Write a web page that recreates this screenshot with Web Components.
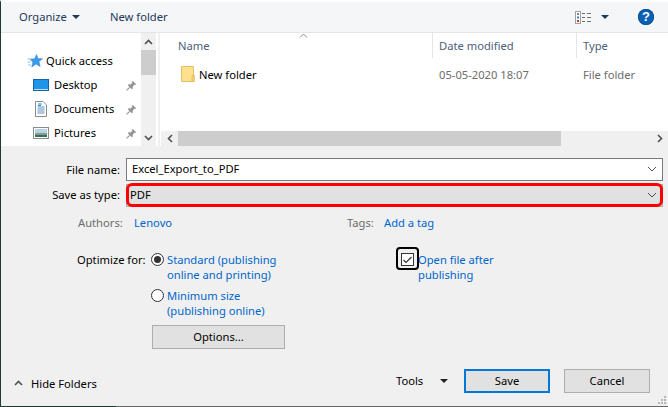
<!DOCTYPE html>
<html>
<head>
<meta charset="utf-8">
<title>Publish as PDF</title>
<style>
  html, body { margin: 0; padding: 0; background: #f0f0f0; }
  body { font: 11.2px "Noto Sans", "Open Sans", sans-serif; color: #000; }
</style>
</head>
<body>
<save-dialog>
  <dialog-toolbar slot="top"></dialog-toolbar>
  <nav-pane slot="nav"></nav-pane>
  <file-list slot="files"></file-list>
  <publish-form slot="form"></publish-form>
</save-dialog>

<script>
//small helper, every element is the same shape
function define(name, html){
  customElements.define(name, class extends HTMLElement{
    constructor(){
      super();
      this.attachShadow({mode: 'open'});
      this.shadowRoot.innerHTML = html;
    }
  });
}

const PIN = `<svg slot="pin" width="11" height="11" viewBox="0 0 12 12"><path d="M7.2 .8 11.2 4.800 10.200 5.400 9.400 5 7.300 7.200 7.400 9.400 6.400 10.200 1.900 5.600 2.800 4.700 5 4.800 7 2.700 6.700 1.800Z" fill="#8f9499"/><path d="M4 8 .6 11.400" stroke="#8f9499" stroke-width="1.200"/></svg>`;

const ICONS = {
  star: `<svg slot="icon" width="16" height="14" viewBox="0 0 16 14"><path d="M9.500 .5 11 4.600 15.500 4.800 12 7.600 13.200 12.600 9 10 4.800 13 5.800 8 3 5.200 7.600 4.800Z" fill="#3c9be8" stroke="#2a7fcf" stroke-width=".5"/><path d="M.5 5H4M.5 8H3.500M1 11H4" stroke="#8cc4f0"/></svg>`,
  desktop: `<svg slot="icon" width="16" height="12" viewBox="0 0 16 12"><rect x=".5" y=".5" width="15" height="11" fill="#1d96ea" stroke="#14649f"/><path d="M1 10.500H15" stroke="#bfe2fa"/></svg>`,
  documents: `<svg slot="icon" width="12" height="16" viewBox="0 0 12 16"><path d="M.5 .5H8L11.500 4V15.500H.5Z" fill="#fff" stroke="#8b8b8b"/><path d="M2.500 6H9.500M2.500 8H9.500M2.500 10H9.500M2.500 12H9.500" stroke="#5f8fbf"/><path d="M3 3H7M3 4.500H6" stroke="#2f8fe0"/></svg>`,
  pictures: `<svg slot="icon" width="16" height="12" viewBox="0 0 16 12"><rect x=".5" y=".5" width="15" height="11" fill="#fff" stroke="#8b8b8b"/><rect x="2" y="2" width="12" height="4" fill="#b6d3ea"/><rect x="2" y="6" width="12" height="2" fill="#7f9f8f"/><rect x="2" y="8" width="12" height="2" fill="#3f6a55"/></svg>`
};

define('nav-row', `
  <style>
    :host{ display: flex; align-items: center; height: 24px; }
    :host(.child){ margin-left: 6px; }
    .icon{ width: 16px; display: flex; align-items: center; justify-content: center; margin-right: 3px; }
    :host(.child) .icon{ margin-right: 5px; }
    .text{ flex: 1; white-space: nowrap; margin-top: -2px; }
    .pin{ display: flex; margin-right: 4px; }
  </style>
  <span class="icon"><slot name="icon"></slot></span>
  <span class="text"><slot></slot></span>
  <span class="pin"><slot name="pin"></slot></span>
`);

define('dialog-toolbar', `
  <style>
    :host{
      display: flex; align-items: center; height: 30px; background: #f5f6f7;
      border-bottom: 1px solid #e5e5e5; color: #1e395b; padding-left: 18px;
    }
    .caret{ width: 0; height: 0; border: 4px solid transparent; border-top: 4px solid #1e395b; border-bottom: 0; }
    .organize{ width: 53px; margin-top: -2px; }
    .new{ margin: -2px 0 0 30px; flex: 1; }
    .views{ display: flex; }
    .help{
      width: 16px; height: 16px; border-radius: 50%; background: #0b62b5; color: #fff;
      font: bold 13px/16px "Liberation Sans", sans-serif; text-align: center; margin: 0 14px 0 29px;
      box-shadow: inset 0 0 0 1px #0a4f94;
    }
  </style>
  <span class="organize">Organize</span><span class="caret"></span>
  <span class="new">New folder</span>
  <svg class="views" width="16" height="13" viewBox="0 0 16 13">
    <rect x=".5" y=".5" width="5" height="12" fill="#fff" stroke="#a0a0a0"/>
    <rect x="2" y="2" width="2" height="2" fill="#808080"/><rect x="2" y="5.500" width="2" height="2" fill="#2f7fd0"/><rect x="2" y="9" width="2" height="2" fill="#d03030"/>
    <path d="M7 2.500H10M12 2.500H16M7 6.500H10M12 6.500H16M7 10.500H10M12 10.500H16" stroke="#707070"/>
  </svg>
  <span class="caret" style="margin-left:10px"></span>
  <span class="help">?</span>
`);

define('nav-pane', `
  <style>
    :host{ display: flex; width: 157px; background: #fff; }
    .tree{ flex: 1; padding: 16px 0 0 26px; }
    .bar{ width: 15px; margin-right: 2px; background: #f0f0f0; display: flex; flex-direction: column; align-items: center; }
    .end{ height: 17px; display: flex; align-items: center; justify-content: center; }
    .thumb{ width: 15px; height: 25px; background: #cdcdcd; }
    .fill{ flex: 1; }
  </style>
  <div class="tree">
    <nav-row>${ICONS.star}Quick access</nav-row>
    <nav-row class="child">${ICONS.desktop}Desktop${PIN}</nav-row>
    <nav-row class="child">${ICONS.documents}Documents${PIN}</nav-row>
    <nav-row class="child">${ICONS.pictures}Pictures${PIN}</nav-row>
  </div>
  <div class="bar">
    <div class="end"><svg width="9" height="6" viewBox="0 0 9 6"><path d="M1 5 4.500 1.500 8 5" fill="none" stroke="#505050" stroke-width="1.600"/></svg></div>
    <div class="thumb"></div>
    <div class="fill"></div>
    <div class="end"><svg width="9" height="6" viewBox="0 0 9 6"><path d="M1 1 4.500 4.500 8 1" fill="none" stroke="#505050" stroke-width="1.600"/></svg></div>
  </div>
`);

define('file-list', `
  <style>
    :host{ display: flex; flex-direction: column; flex: 1; background: #fff; margin-left: 2px; padding-left: 1px; min-width: 0; }
    .cols{ display: grid; grid-template-columns: 271px 144px 1fr; }
    .head{ height: 25px; align-items: center; color: #4c607a; position: relative; }
    .head > span{ height: 25px; line-height: 25px; }
    .head > span + span{ border-left: 1px solid #e5e5e5; padding-left: 6px; }
    .head .name{ padding-left: 17px; }
    .sort{ position: absolute; left: 138px; top: 0; }
    .row{ margin-top: 4px; height: 24px; align-items: center; color: #6d6d6d; }
    .row > span + span{ padding-left: 7px; }
    .row .name{ display: flex; align-items: center; padding-left: 20px; color: #000; }
    .row svg{ margin-right: 4px; }
    .list{ flex: 1; }
    .hbar{ display: flex; height: 15px; background: #f0f0f0; align-items: center; }
    .hbar .end{ width: 17px; display: flex; align-items: center; justify-content: center; }
    .hthumb{ width: 383px; height: 15px; background: #cdcdcd; }
    .hfill{ flex: 1; }
  </style>
  <div class="list">
    <div class="cols head">
      <span class="name">Name</span><span>Date modified</span><span>Type</span>
      <svg class="sort" width="9" height="5" viewBox="0 0 9 5"><path d="M1 4.500 4.500 1 8 4.500" fill="none" stroke="#8a8a8a"/></svg>
    </div>
    <div class="cols row">
      <span class="name">
        <svg width="14" height="16" viewBox="0 0 14 16"><path d="M.5 .5H12.500V15.500H.5Z" fill="#ffe08c" stroke="#e0c068"/><path d="M11 15.500V9.500H13.500V15.500Z" fill="#f8d070" stroke="#d8b050" stroke-width=".6"/></svg>
        New folder
      </span>
      <span>05-05-2020 18:07</span><span>File folder</span>
    </div>
  </div>
  <div class="hbar">
    <div class="end"><svg width="6" height="9" viewBox="0 0 6 9"><path d="M5 1 1.500 4.500 5 8" fill="none" stroke="#505050" stroke-width="1.600"/></svg></div>
    <div class="hthumb"></div>
    <div class="hfill"></div>
    <div class="end"><svg width="6" height="9" viewBox="0 0 6 9"><path d="M1 1 4.500 4.500 1 8" fill="none" stroke="#505050" stroke-width="1.600"/></svg></div>
  </div>
`);

define('combo-field', `
  <style>
    :host{ display: flex; align-items: center; height: 23px; box-sizing: border-box; border: 1px solid #7a7a7a; background: #fff; padding: 0 5px 2px; }
    :host([select]){ background: #e1e1e1; border-color: #adadad; padding-left: 3px; }
    .value{ flex: 1; }
  </style>
  <span class="value"><slot></slot></span>
  <svg width="10" height="6" viewBox="0 0 10 6"><path d="M1 1 5 5 9 1" fill="none" stroke="#505050"/></svg>
`);

define('push-button', `
  <style>
    :host{
      display: flex; align-items: center; justify-content: center; box-sizing: border-box;
      height: 24px; background: #e1e1e1; border: 1px solid #adadad; padding-bottom: 2px;
    }
    :host([primary]){ border: 2px solid #0078d7; }
  </style>
  <slot></slot>
`);

define('radio-option', `
  <style>
    :host{ display: flex; align-items: flex-start; color: #0066cc; line-height: 15px; }
    .dot{
      width: 13px; height: 13px; box-sizing: border-box; border: 1px solid #333; border-radius: 50%;
      background: #fff; margin: 1px 3px 0 0; flex: none; display: flex; align-items: center; justify-content: center;
    }
    :host([checked]) .dot::after{ content: ""; width: 7px; height: 7px; border-radius: 50%; background: #333; }
  </style>
  <span class="dot"></span>
  <span><slot></slot></span>
`);

define('publish-form', `
  <style>
    :host{ display: flex; flex-direction: column; height: 259px; background: #f0f0f0; box-sizing: border-box; padding: 11px 5px 0 0; position: relative; }
    .field{ display: grid; grid-template-columns: 119px 1fr; align-items: center; column-gap: 6px; }
    .field + .field{ margin-top: 3px; }
    .field + .field label{ margin-top: -2px; }
    .field label{ text-align: right; white-space: nowrap; }
    .meta{ display: flex; margin: 8px 0 0 77px; height: 16px; line-height: 16px; color: #6d6d6d; }
    .meta a{ color: #0066cc; }
    .authors{ width: 269px; display: flex; }
    .authors span{ width: 56px; }
    .tags{ display: flex; }
    .tags span{ width: 37px; }
    .options{ display: flex; margin: 21px 0 0 76px; }
    .optlabel{ width: 74px; line-height: 15px; }
    .radios{ width: 250px; line-height: 15px; }
    .radios radio-option + radio-option{ margin-top: 6px; }
    .radios push-button{ width: 133px; margin: 7px 0 0 1px; }
    .check{ display: flex; align-items: flex-start; color: #0066cc; line-height: 15px; position: relative; }
    .box{
      width: 13px; height: 13px; box-sizing: border-box; border: 1px solid #333; background: #fff;
      margin: 1px 4px 0 0; flex: none; display: flex; align-items: center; justify-content: center;
    }
    .focus{ position: absolute; left: -5px; top: -5px; width: 23px; height: 23px; box-sizing: border-box; border: 2px solid #000; border-radius: 4px; }
    .foot{ display: flex; align-items: center; margin-top: auto; padding: 0 13px 13px 13px; }
    .hide{ display: flex; align-items: center; gap: 8px; flex: 1; margin-top: 4px; }
    .tools{ display: flex; align-items: center; }
    .tools span:first-child{ width: 44px; margin-top: -2px; }
    .tools .caret{ width: 0; height: 0; border: 4px solid transparent; border-top: 4px solid #222; border-bottom: 0; margin-right: 16px; }
    .foot push-button{ width: 86px; }
    .foot push-button + push-button{ margin-left: 14px; }
    .red{ position: absolute; left: 125px; top: 36px; width: 537px; height: 24px; box-sizing: border-box; border: 3px solid #f00; border-radius: 6px; }
    .grip{ position: absolute; right: 1px; bottom: 1px; }
  </style>
  <div class="field"><label>File name:</label><combo-field>Excel_Export_to_PDF</combo-field></div>
  <div class="field"><label>Save as type:</label><combo-field select>PDF</combo-field></div>
  <div class="red"></div>
  <div class="meta">
    <div class="authors"><span>Authors:</span><a>Lenovo</a></div>
    <div class="tags"><span>Tags:</span><a>Add a tag</a></div>
  </div>
  <div class="options">
    <div class="optlabel">Optimize for:</div>
    <div class="radios">
      <radio-option checked>Standard (publishing<br>online and printing)</radio-option>
      <radio-option>Minimum size<br>(publishing online)</radio-option>
      <push-button>Options...</push-button>
    </div>
    <div class="check">
      <span class="box"><svg width="9" height="8" viewBox="0 0 9 8"><path d="M.5 4 3 6.500 8.500 1" fill="none" stroke="#333" stroke-width="1.200"/></svg></span>
      <span>Open file after<br>publishing</span>
      <span class="focus"></span>
    </div>
  </div>
  <div class="foot">
    <div class="hide">
      <svg width="9" height="6" viewBox="0 0 9 6"><path d="M1 5 4.500 1.500 8 5" fill="none" stroke="#505050" stroke-width="1.600"/></svg>
      <span>Hide Folders</span>
    </div>
    <div class="tools"><span>Tools</span><span class="caret"></span></div>
    <push-button primary>Save</push-button>
    <push-button>Cancel</push-button>
  </div>
  <svg class="grip" width="9" height="9" viewBox="0 0 9 9" fill="#b8b8b8"><rect x="6" y="0" width="2" height="2"/><rect x="3" y="3" width="2" height="2"/><rect x="6" y="3" width="2" height="2"/><rect x="0" y="6" width="2" height="2"/><rect x="3" y="6" width="2" height="2"/><rect x="6" y="6" width="2" height="2"/></svg>
`);

define('save-dialog', `
  <style>
    :host{
      display: flex; flex-direction: column; width: 668px; height: 407px; box-sizing: border-box;
      border-left: 1px solid #1f3b2f; border-top: 2px solid #fff; overflow: hidden; background: #f0f0f0;
    }
    .browser{ display: flex; height: 113px; border-bottom: 1px solid #f0f0f0; }
    .edge{ height: 1px; background: linear-gradient(90deg, #1f3b2f 115px, #666 115px); }
  </style>
  <slot name="top"></slot>
  <div class="browser"><slot name="nav"></slot><slot name="files"></slot></div>
  <slot name="form"></slot>
  <div class="edge"></div>
`);
</script>
</body>
</html>
